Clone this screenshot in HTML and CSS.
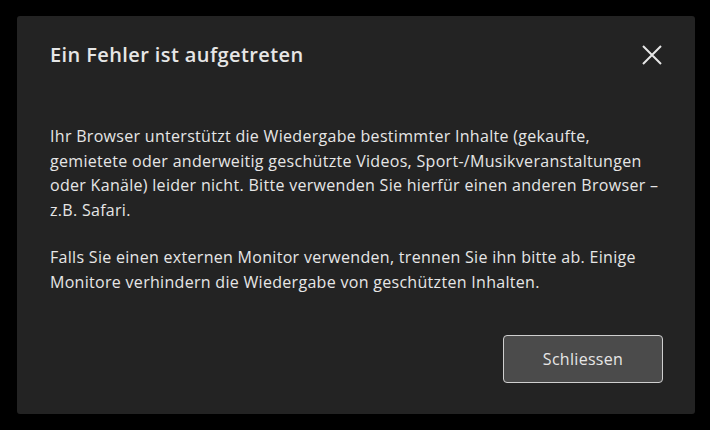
FILE: index.html
```html
<!DOCTYPE html>
<html lang="de">
<head>
<meta charset="utf-8">
<link rel="stylesheet" href="styles.css">
</head>
<body>
<div class="dialog">
  <div class="header">
    <h1 class="title">Ein Fehler ist aufgetreten</h1>
    <button class="close" aria-label="Schliessen">
      <svg width="20" height="20" viewBox="0 0 20 20"><path d="M1 1 L19 19 M19 1 L1 19" stroke="#e6e6e6" stroke-width="2" fill="none"/></svg>
    </button>
  </div>
  <div class="body">
    <p>Ihr Browser unterstützt die Wiedergabe bestimmter Inhalte (gekaufte, gemietete oder anderweitig geschützte Videos, Sport-/Musikveranstaltungen oder Kanäle) leider nicht. Bitte verwenden Sie hierfür einen anderen Browser – z.B. Safari.</p>
    <p>Falls Sie einen externen Monitor verwenden, trennen Sie ihn bitte ab. Einige Monitore verhindern die Wiedergabe von geschützten Inhalten.</p>
  </div>
  <div class="footer">
    <button class="btn">Schliessen</button>
  </div>
</div>
</body>
</html>
```
FILE: styles.css
```css
html, body { margin: 0; padding: 0; background: #000; }
body { padding: 16px 15px 16px 17px; font-family: "Open Sans", sans-serif; color: #e6e6e6; }
.dialog {
  width: 678px; height: 398px; box-sizing: border-box;
  background: #232323; border-radius: 3px;
  padding: 28px 32px 0 33px;
  display: flex; flex-direction: column;
}
.header { display: flex; align-items: center; justify-content: space-between; height: 20px; }
.title { margin: 0; font-size: 20px; font-weight: 600; color: #e6e6e6; letter-spacing: 0.4px; }
.close { background: none; border: 0; padding: 0; margin-right: 1px; margin-top: 1px; display: flex; cursor: pointer; }
.body { margin-top: 60px; font-size: 16px; line-height: 24.5px; letter-spacing: 0.3px; }
.body p { margin: 0 0 23px; }
.footer { display: flex; justify-content: flex-end; margin-top: 18px; }
.btn {
  width: 160px; height: 48px; box-sizing: border-box;
  background: #4b4b4b; border: 1px solid #cfcfcf; border-radius: 4px;
  color: #e6e6e6; font-family: inherit; font-size: 16px; letter-spacing: 0.3px;
}
```
